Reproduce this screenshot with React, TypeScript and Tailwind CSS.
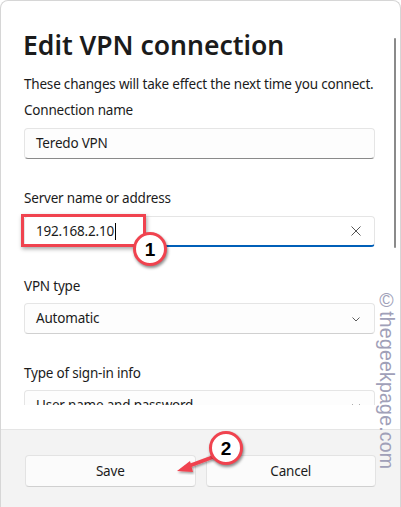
import React from "react";

const font = { fontFamily: '"Noto Sans", "Open Sans", sans-serif' };

function Chevron() {
  return (
    <svg width="12" height="12" viewBox="0 0 12 12" className="text-[#5c5c5c]">
      <path d="M2.5 4.5 L6 8 L9.5 4.5" fill="none" stroke="currentColor" strokeWidth="1" />
    </svg>
  );
}

function Badge({ n }: { n: string }) {
  return (
    <div className="w-[34px] h-[34px] rounded-full bg-white border-[3px] border-[#f0434f] shadow-[1px_2px_3px_rgba(0,0,0,0.45)] flex items-center justify-center">
      <span className="text-[19px] font-bold text-black leading-none" style={{ fontFamily: '"Liberation Sans", Arial, sans-serif' }}>
        {n}
      </span>
    </div>
  );
}

export default function App() {
  return (
    <div className="relative w-[401px] h-[507px] overflow-hidden bg-white text-[#1b1b1b] text-[13.5px] tracking-[-0.2px]" style={font}>
      <div className="absolute inset-0 rounded-t-[8px] border-l border-t border-r border-[#d6d6d6] pointer-events-none" />
      {/* scrollbar */}
      <div className="absolute left-[394px] top-[38px] w-[2px] h-[210px] rounded bg-[#8a8a8a]" />

      <div className="flex flex-col h-full">
        <div className="h-[405px] overflow-hidden pl-[24px] pr-[26px] pt-[27px]">
          <h1 className="text-[26.5px] font-semibold leading-[36px] tracking-normal -ml-[1px]">Edit VPN connection</h1>
          <p className="mt-[11px] leading-[20px] whitespace-nowrap">
            These changes will take effect the next time you connect.
          </p>
          <p className="mt-[6px] leading-[20px]">Connection name</p>
          <div className="mt-[8px] h-[31px] rounded-[4px] border border-[#e5e5e5] border-b-[#8a8a8a] bg-[#fdfdfd] flex items-center px-[11px]">
            Teredo VPN
          </div>

          <p className="mt-[29px] leading-[20px]">Server name or address</p>
          <div className="relative mt-[8px] h-[31px] rounded-[4px] border border-[#e5e5e5] border-b-2 border-b-[#005fb8] bg-white flex items-center pl-[11px] pr-[12px]">
            <span>192.168.2.10</span>
            <span className="w-px h-[17px] bg-black ml-[1px]" />
            <span className="flex-1" />
            <svg width="12" height="12" viewBox="0 0 12 12">
              <path d="M1.5 1.5 L10.5 10.5 M10.5 1.5 L1.5 10.5" stroke="#555" strokeWidth="1" />
            </svg>
            <div className="absolute -left-[4px] -top-[3px] w-[125px] h-[33px] border-[3px] border-[#f0434f] shadow-[1px_2px_4px_rgba(0,0,0,0.35)]" />
            <div className="absolute left-[108px] top-[15px]">
              <Badge n="1" />
            </div>
          </div>

          <p className="mt-[29px] leading-[20px]">VPN type</p>
          <div className="mt-[7px] h-[31px] rounded-[4px] border border-[#e5e5e5] border-b-[#d0d0d0] bg-[#fdfdfd] flex items-center justify-between pl-[11px] pr-[12px]">
            <span>Automatic</span>
            <Chevron />
          </div>

          <p className="mt-[29px] leading-[20px]">Type of sign-in info</p>
          <div className="mt-[7px] h-[31px] rounded-[4px] border border-[#e5e5e5] border-b-[#d0d0d0] bg-[#fdfdfd] flex items-center justify-between pl-[11px] pr-[12px]">
            <span>User name and password</span>
            <Chevron />
          </div>
        </div>

        <div className="h-[24px]" />

        <div className="flex-1 bg-[#f3f3f3] border-t border-[#e5e5e5] border-l border-l-[#d6d6d6] px-[24px] pt-[25px]">
          <div className="grid grid-cols-2 gap-[10px] pr-[1px]">
            <button className="h-[32px] rounded-[4px] border border-[#e3e3e3] border-b-[#d0d0d0] bg-[#fbfbfb]">Save</button>
            <button className="h-[32px] rounded-[4px] border border-[#e3e3e3] border-b-[#d0d0d0] bg-[#fbfbfb]">Cancel</button>
          </div>
        </div>
      </div>

      {/* annotation 2 */}
      <svg className="absolute left-0 top-0 pointer-events-none" width="401" height="507">
        <defs>
          <filter id="sh" x="-20%" y="-20%" width="140%" height="140%">
            <feDropShadow dx="1" dy="1.5" stdDeviation="1.2" floodOpacity="0.4" />
          </filter>
        </defs>
        <g filter="url(#sh)">
          <line x1="213" y1="457" x2="186" y2="467" stroke="#f0434f" strokeWidth="3.5" strokeLinecap="round" />
          <polygon points="177,471 190,461 193,472" fill="#f0434f" />
        </g>
      </svg>
      <div className="absolute left-[209px] top-[431px]">
        <Badge n="2" />
      </div>

      <div
        className="absolute left-[376px] top-[289px] [writing-mode:vertical-rl] text-[19.5px] text-[#a0a0b8] leading-none tracking-[0.2px]"
        style={{ fontFamily: '"Liberation Sans", Arial, sans-serif' }}
      >
        ©thegeekpage.com
      </div>
    </div>
  );
}
